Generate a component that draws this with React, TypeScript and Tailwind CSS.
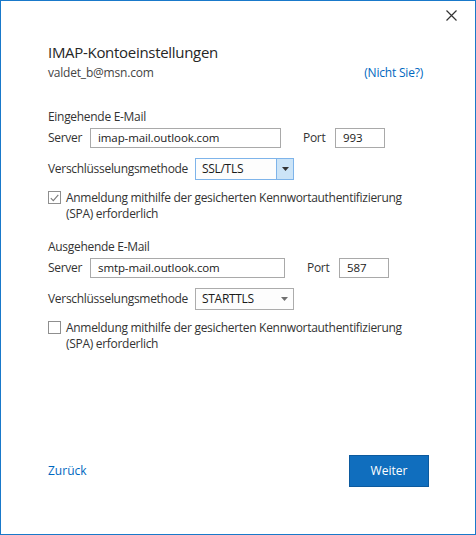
import React from "react";

const font = { fontFamily: '"Open Sans", "Noto Sans", Arial, sans-serif' };

function TextBox({ value, width }: { value: string; width: string }) {
  return (
    <div
      className={`${width} flex h-[20px] items-center border border-[#a9a9a9] bg-white pl-[7px] text-[11.5px] tracking-[-0.1px] text-[#1a1a1a]`}
    >
      {value}
    </div>
  );
}

function Select({ value, focused }: { value: string; focused?: boolean }) {
  return (
    <div
      className={
        focused
          ? "flex h-[22px] w-[99px] items-stretch border border-[#7eb4ea] bg-[#fdfdfd]"
          : "flex h-[22px] w-[99px] items-stretch border border-[#acacac] bg-[#fdfdfd]"
      }
    >
      <div className="flex flex-1 items-center pl-[6px] text-[12px] text-[#1a1a1a]">{value}</div>
      <div
        className={
          focused
            ? "flex w-[17px] items-center justify-center border-l border-[#7eb4ea] bg-[#cce4f7]"
            : "flex w-[17px] items-center justify-center"
        }
      >
        <svg width="7" height="4" viewBox="0 0 7 4">
          <path d="M0 0 H7 L3.5 4 Z" fill={focused ? "#333" : "#707070"} />
        </svg>
      </div>
    </div>
  );
}

function Check({ checked }: { checked?: boolean }) {
  return (
    <div className="mt-[1px] flex h-[13px] w-[13px] shrink-0 items-center justify-center border border-[#8f8f8f] bg-white">
      {checked ? (
        <svg width="9" height="8" viewBox="0 0 9 8">
          <path d="M0.8 4.2 L3.3 6.6 L8.3 0.8" fill="none" stroke="#7a7a7a" strokeWidth="1.1" />
        </svg>
      ) : null}
    </div>
  );
}

function Section({
  heading,
  server,
  port,
  serverWidth,
  method,
  focused,
  checked,
}: {
  heading: string;
  server: string;
  port: string;
  serverWidth: string;
  method: string;
  focused?: boolean;
  checked?: boolean;
}) {
  return (
    <section className="flex flex-col text-[12px] tracking-[-0.3px] text-[#333]">
      <div className="h-[18px] leading-[18px]">{heading}</div>
      <div className="mt-[1px] flex h-[22px] items-center">
        <span className="w-[42px]">Server</span>
        <TextBox value={server} width={serverWidth} />
        <span className="ml-[22px] w-[32px]">Port</span>
        <TextBox value={port} width="w-[50px]" />
      </div>
      <div className="mt-[9px] flex h-[22px] items-center">
        <span className="w-[147px] whitespace-nowrap">Verschlüsselungsmethode</span>
        <Select value={method} focused={focused} />
      </div>
      <div className="mt-[10px] flex items-start gap-[5px] leading-[16px]">
        <Check checked={checked} />
        <span className="whitespace-nowrap">
          Anmeldung mithilfe der gesicherten Kennwortauthentifizierung
          <br />
          (SPA) erforderlich
        </span>
      </div>
    </section>
  );
}

export default function App(): React.JSX.Element {
  return (
    <div
      style={font}
      className="flex h-[535px] w-[476px] flex-col border border-[#1979ca] bg-white"
    >
      <div className="flex h-[29px] justify-end pr-[18px] pt-[9px]">
        <svg width="11" height="11" viewBox="0 0 11 11">
          <path d="M0.5 0.5 L10.5 10.5 M10.5 0.5 L0.5 10.5" stroke="#333" strokeWidth="1.2" />
        </svg>
      </div>
      <div className="flex flex-col pl-[47px] pr-[46px]">
        <h1 className="mt-[10px] h-[24px] text-[15px] leading-[24px] tracking-[-0.3px] text-[#262626]">
          IMAP-Kontoeinstellungen
        </h1>
        <div className="flex h-[18px] items-center justify-between pr-[6px] text-[12px] tracking-[-0.2px]">
          <span className="text-[#444]">valdet_b@msn.com</span>
          <span className="text-[#0067c0]">(Nicht Sie?)</span>
        </div>
        <div className="mt-[26px]">
          <Section
            heading="Eingehende E-Mail"
            server="imap-mail.outlook.com"
            port="993"
            serverWidth="w-[191px]"
            method="SSL/TLS"
            focused
            checked
          />
        </div>
        <div className="mt-[16px]">
          <Section
            heading="Ausgehende E-Mail"
            server="smtp-mail.outlook.com"
            port="587"
            serverWidth="w-[195px]"
            method="STARTTLS"
          />
        </div>
      </div>
      <div className="mt-auto mb-[47px] flex items-center justify-between pl-[47px] pr-[46px]">
        <span className="text-[12px] font-medium text-[#0067c0]">Zurück</span>
        <button className="h-[32px] w-[80px] border border-[#0c5a9e] bg-[#106ebe] text-[12px] font-medium text-white">
          Weiter
        </button>
      </div>
    </div>
  );
}
